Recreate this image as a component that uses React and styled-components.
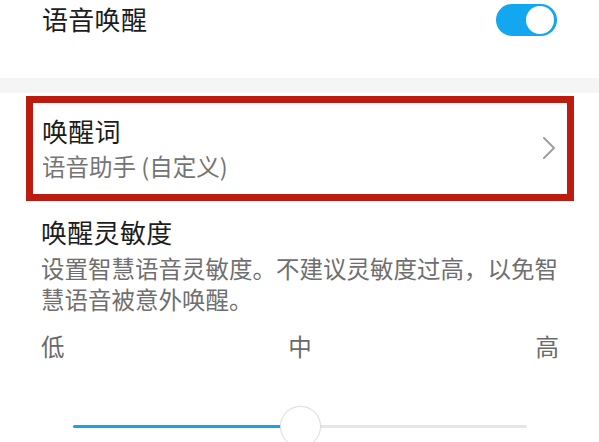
import React from 'react';
import styled, { createGlobalStyle } from 'styled-components';

const GlobalStyle = createGlobalStyle`
  html, body {
    margin: 0;
    padding: 0;
    background: #ffffff;
  }
  body {
    font-family: 'Noto Sans CJK SC', 'Noto Sans', sans-serif;
    overflow: hidden;
  }
`;

const Page = styled.div`
  width: 599px;
  height: 442px;
  overflow: hidden;
  background: #ffffff;
`;

const SwitchRow = styled.div`
  display: flex;
  justify-content: space-between;
  align-items: flex-start;
  height: 78px;
  box-sizing: border-box;
  padding: 1px 42px 0 42px;
`;

const Title = styled.div`
  font-size: 26px;
  line-height: ${(p) => p.$lh || 36}px;
  color: #1c1c1c;
  letter-spacing: 0.3px;
`;

const Toggle = styled.div`
  position: relative;
  width: 61px;
  height: 32px;
  margin-top: 3px;
  border-radius: 16px;
  background: ${(p) => (p.$on ? '#13a7ef' : '#cfcfcf')};
  flex-shrink: 0;
`;

const ToggleKnob = styled.div`
  position: absolute;
  top: 2px;
  right: ${(p) => (p.$on ? '3px' : 'auto')};
  left: ${(p) => (p.$on ? 'auto' : '3px')};
  width: 28px;
  height: 28px;
  border-radius: 50%;
  background: #ffffff;
`;

const Band = styled.div`
  height: 15px;
  background: #f5f5f5;
  margin-bottom: 3px;
`;

const Highlight = styled.div`
  margin: 0 25px 0 26px;
  height: 105px;
  box-sizing: border-box;
  border: 7px solid #bc1b0f;
`;

const NavItem = styled.div`
  display: flex;
  align-items: center;
  justify-content: space-between;
  height: 100%;
  box-sizing: border-box;
  padding: 0 11px 2px 9px;
`;

const TextCol = styled.div`
  display: flex;
  flex-direction: column;
  gap: 2px;
`;

const Sub = styled.div`
  font-size: 23.5px;
  line-height: ${(p) => p.$lh || 32}px;
  color: #757575;
`;

const Section = styled.div`
  padding: 13px 40px 0 41px;
`;

const Desc = styled.div`
  margin-top: 3px;
  font-size: 23.5px;
  line-height: 31px;
  color: #6f6f6f;
`;

const Labels = styled.div`
  display: flex;
  justify-content: space-between;
  padding: 0 40px 0 41px;
  margin-top: 15px;
  font-size: 23.5px;
  line-height: 32px;
  color: #6a6a6a;
`;

const SliderArea = styled.div`
  position: relative;
  height: 79px;
  margin: 0 72px 0 73px;
`;

const Track = styled.div`
  position: absolute;
  left: 0;
  right: 0;
  top: 63px;
  height: 3px;
  border-radius: 2px;
  background: #e6e6e6;
`;

const Fill = styled.div`
  height: 100%;
  border-radius: 2px;
  background: #1aa3e4;
`;

const Thumb = styled.div`
  position: absolute;
  top: 44px;
  width: 41px;
  height: 41px;
  margin-left: -20px;
  box-sizing: border-box;
  border-radius: 50%;
  border: 1px solid #dedede;
  background: #ffffff;
  box-shadow: 0 0 2px rgba(0, 0, 0, 0.08);
`;

const Chevron = () => (
  <svg width="14" height="24" viewBox="0 0 14 24">
    <path d="M2 2 L12 12 L2 22" fill="none" stroke="#9e9e9e" strokeWidth="2" strokeLinecap="round" strokeLinejoin="round" />
  </svg>
);

export default function App() {
  const level = 50;
  return (
    <Page>
      <GlobalStyle />
      <SwitchRow>
        <Title>语音唤醒</Title>
        <Toggle $on>
          <ToggleKnob $on />
        </Toggle>
      </SwitchRow>
      <Band />
      <Highlight>
        <NavItem>
          <TextCol>
            <Title $lh={34}>唤醒词</Title>
            <Sub>语音助手 (自定义)</Sub>
          </TextCol>
          <Chevron />
        </NavItem>
      </Highlight>
      <Section>
        <Title>唤醒灵敏度</Title>
        <Desc>设置智慧语音灵敏度。不建议灵敏度过高，以免智慧语音被意外唤醒。</Desc>
      </Section>
      <Labels>
        <span>低</span>
        <span>中</span>
        <span>高</span>
      </Labels>
      <SliderArea>
        <Track>
          <Fill style={{ width: `${level}%` }} />
        </Track>
        <Thumb style={{ left: `${level}%` }} />
      </SliderArea>
    </Page>
  );
}
